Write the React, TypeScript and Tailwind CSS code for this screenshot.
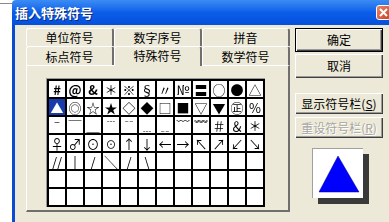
import React from 'react';

const cjk = "font-['Noto_Sans_CJK_SC','DejaVu_Sans',sans-serif]";

const rows: string[][] = [
  ['#', '@', '&', '＊', '※', '§', '〃', '№', '〓', '○', '●', '△'],
  ['▲', '◎', '☆', '★', '◇', '◆', '□', '■', '▽', '▼', '㊣', '%'],
  ['ˉ', '￣', '＿', '﹉', '﹊', '﹍', '﹎', '﹋', '﹌', '＃', '＆', '＊'],
  ['♀', '♂', '⊙', '☉', '↑', '↓', '←', '→', '↖', '↗', '↙', '↘'],
  ['//', '|', '/', '╲', '/', '\\', '', '', '', '', '', ''],
  ['', '', '', '', '', '', '', '', '', '', '', ''],
  ['', '', '', '', '', '', '', '', '', '', '', ''],
];

const Tab = ({ label, active = false, tall = false }: { label: string; active?: boolean; tall?: boolean }) => (
  <div
    className={`flex-1 flex justify-center border-t border-l border-white border-r-2 border-r-[#6f6f6f] rounded-t-[3px] bg-[#ece9d8] text-[12px] text-black ${
      active ? 'relative -mb-px h-[20px] items-start' : tall ? 'h-[19px] items-center pt-[2px]' : 'h-[18px] items-center'
    }`}
  >
    {label}
  </div>
);

const btn =
  'bg-[#ece9d8] text-[12px] shadow-[inset_1px_1px_0_#fff,inset_-1px_-1px_0_#404040,inset_-2px_-2px_0_#9a9a9a]';

export default function App() {
  return (
    <div className={`w-[389px] h-[222px] overflow-hidden bg-white flex ${cjk}`}>
      <div className="w-[12px] shrink-0">
        <div className="mt-[3px] h-px bg-[#8a8a8a]" />
      </div>

      <div className="w-[380px] shrink-0 flex flex-col">
        {/* title bar */}
        <div className="h-[25px] flex items-center bg-gradient-to-b from-[#3c8cf4] via-[#0b5de8] to-[#0550dc] rounded-tl-[4px]">
          <span className="pl-[3px] text-white font-bold text-[13px] leading-none [text-shadow:1px_1px_0_#0a2a80]">
            插入特殊符号
          </span>
          <div className="ml-auto mr-[1px] w-[15px] h-[15px] rounded-[3px] border border-white bg-gradient-to-br from-[#e8836a] to-[#c9431e] flex items-center justify-center">
            <svg width="9" height="9" viewBox="0 0 9 9">
              <path d="M1 1 L8 8 M8 1 L1 8" stroke="white" strokeWidth="2" />
            </svg>
          </div>
        </div>

        {/* body */}
        <div className="flex-1 flex border-l-[3px] border-[#0a4bd2] bg-[#ece9d8] pl-[11px] pt-[3px]">
          {/* left: tabs + panel */}
          <div className="w-[264px] flex flex-col">
            <div className="flex">
              <Tab label="单位符号" />
              <Tab label="数字序号" />
              <Tab label="拼音" />
            </div>
            <div className="flex items-end h-[19px]">
              <Tab label="标点符号" tall />
              <Tab label="特殊符号" active />
              <Tab label="数学符号" tall />
            </div>
            <div className="h-[147px] border-t border-l border-white border-r-2 border-r-[#6f6f6f] border-b-2 border-b-[#6f6f6f] pl-[19px] pt-[9px]">
              <div className="inline-block border-t border-l border-[#9a9a9a]">
                <div className="grid grid-cols-[repeat(12,16px)] auto-rows-[16px] gap-[2px] p-[2px] bg-black will-change-transform">
                  {rows.flat().map((s, i) => {
                    const sel = i === 12;
                    return (
                      <div
                        key={i}
                        className={`flex items-center justify-center text-[13px] leading-none ${
                          sel ? 'bg-[#1a3caa] text-white' : 'bg-white text-black'
                        } ${i < 3 ? 'font-bold' : ''}`}
                      >
                        {s}
                      </div>
                    );
                  })}
                </div>
              </div>
            </div>
          </div>

          {/* right: buttons + preview */}
          <div className="ml-[5px] w-[88px] flex flex-col">
            <button className={`h-[24px] border border-black text-black ${btn}`}>确定</button>
            <button className={`mt-[2px] h-[24px] text-black ${btn}`}>取消</button>
            <button className={`mt-[15px] h-[21px] text-black ${btn}`}>
              显示符号栏(<span className="underline">S</span>)
            </button>
            <button className={`mt-[3px] h-[21px] text-[#a8a6a0] [text-shadow:1px_1px_0_#fff] ${btn}`}>
              重设符号栏(<span className="underline">R</span>)
            </button>
            <div className="mt-[10px] ml-[17px] w-[51px] h-[50px] bg-white border-t border-l border-[#a0a0a0] shadow-[6px_6px_0_#3a3a3a]">
              <svg width="50" height="49" viewBox="0 0 50 49">
                <polygon points="25,7 6,43 46,43" fill="#0000ff" stroke="#00008a" strokeWidth="0.5" />
              </svg>
            </div>
          </div>
        </div>
      </div>
    </div>
  );
}
